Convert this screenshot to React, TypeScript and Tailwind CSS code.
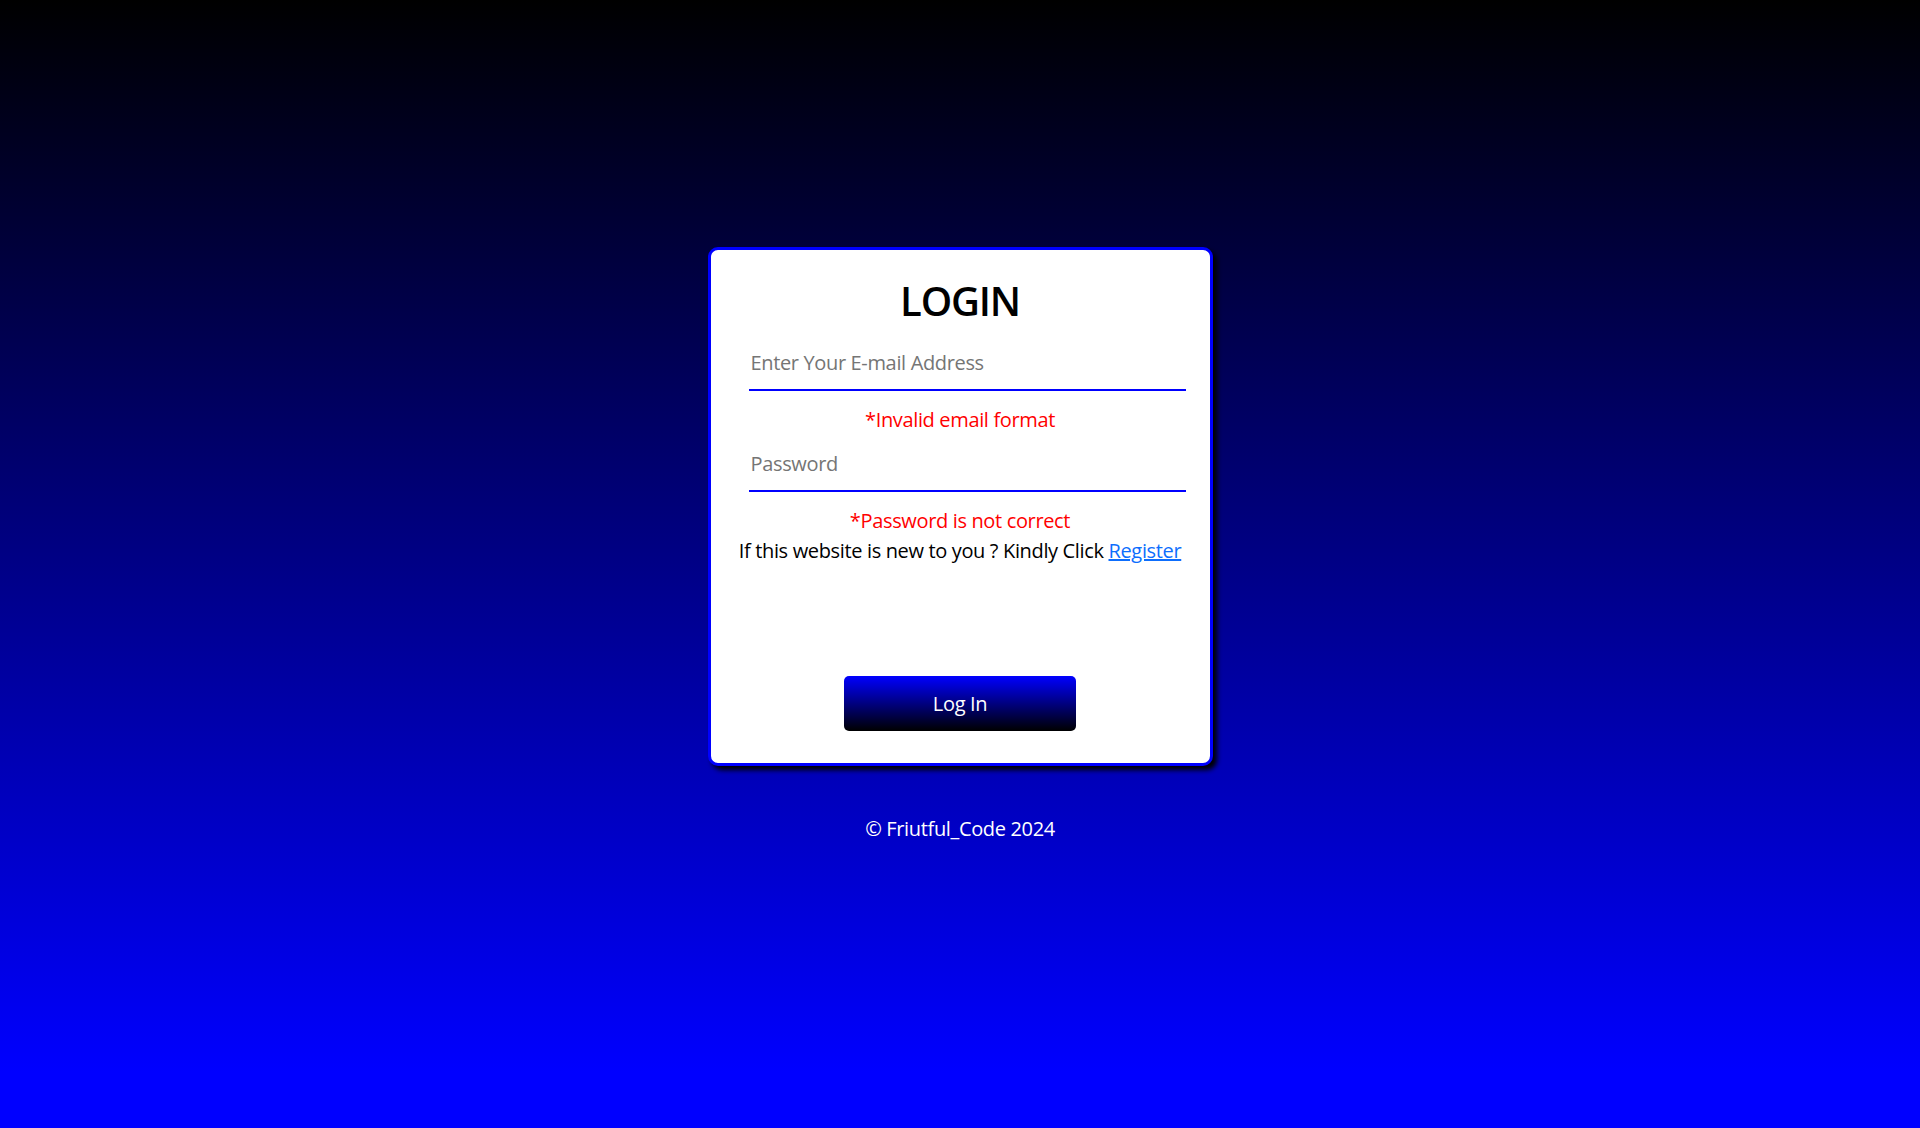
import { useState } from "react";

export default function App() {
  const [email, setEmail] = useState("");
  const [password, setPassword] = useState("");

  return (
    <div className="min-h-screen w-full flex flex-col items-center bg-[linear-gradient(to_bottom,#000000_0%,#0000ff_95%,#0000ff_100%)] font-['Segoe_UI','Open_Sans',sans-serif]">
      {/* Login card */}
      <div className="mt-[247px] w-[505px] flex flex-col items-center bg-white border-[3px] border-[#0000ff] rounded-[10px] shadow-[4px_4px_5px_#000] pt-[27px] pb-[32px]">
        <h1 className="text-[40px] leading-[48px] font-semibold tracking-[-1.2px] text-black">
          LOGIN
        </h1>

        <input
          type="email"
          value={email}
          onChange={(e) => setEmail(e.target.value)}
          placeholder="Enter Your E-mail Address"
          className="self-start ml-[38px] mt-[13px] w-[437px] pl-[2px] pt-[10px] pb-[11px] text-[20px] leading-[30px] tracking-[-0.35px] text-black placeholder:text-[#757575] border-b-2 border-[#0000ff] outline-none bg-transparent"
        />
        <p className="mt-[14px] text-[20px] leading-[30px] tracking-[-0.35px] text-[#ff0000]">
          *Invalid email format
        </p>

        <input
          type="password"
          value={password}
          onChange={(e) => setPassword(e.target.value)}
          placeholder="Password"
          className="self-start ml-[38px] mt-[4px] w-[437px] pl-[2px] pt-[10px] pb-[11px] text-[20px] leading-[30px] tracking-[-0.35px] text-black placeholder:text-[#757575] border-b-2 border-[#0000ff] outline-none bg-transparent"
        />
        <p className="mt-[14px] text-[20px] leading-[30px] tracking-[-0.35px] text-[#ff0000]">
          *Password is not correct
        </p>
        <p className="text-[20px] leading-[30px] tracking-[-0.35px] text-black whitespace-nowrap">
          If this website is new to you ? Kindly Click{" "}
          <a href="#" className="text-[#0d6efd] underline">
            Register
          </a>
        </p>

        <button className="mt-[110px] w-[232px] h-[55px] rounded-[5px] bg-[linear-gradient(to_bottom,#0000ff,#000000)] text-white text-[20px] leading-[30px] tracking-[-0.35px]">
          Log In
        </button>
      </div>

      {/* Footer */}
      <p className="mt-[48px] text-[20px] leading-[30px] tracking-[-0.35px] text-white">
        © Friutful_Code 2024
      </p>
    </div>
  );
}
